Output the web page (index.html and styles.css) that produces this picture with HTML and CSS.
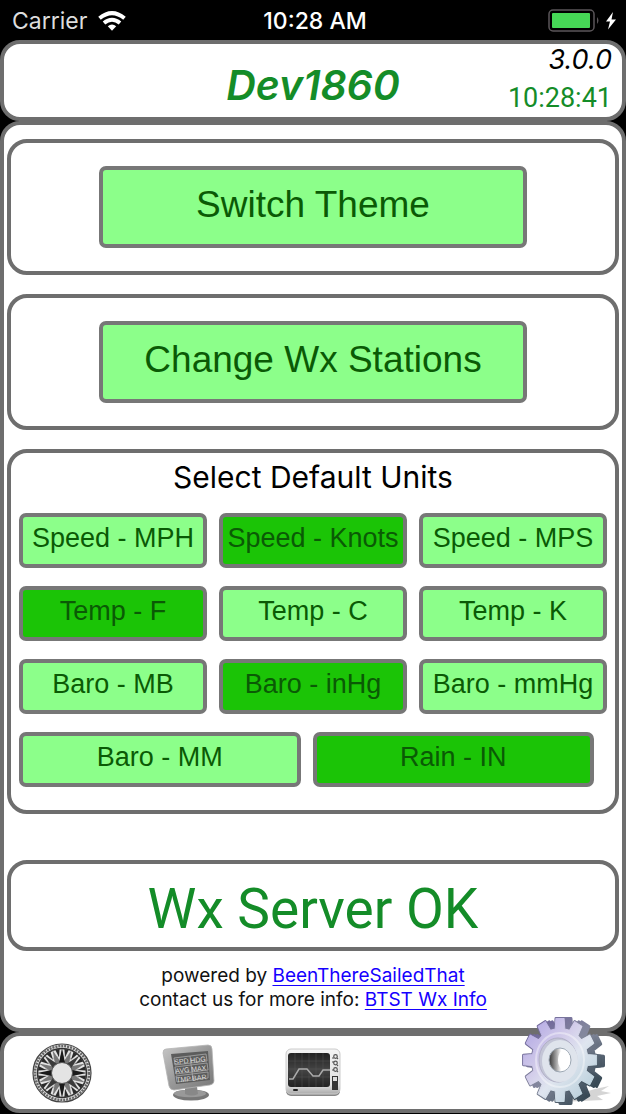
FILE: index.html
```html
<!DOCTYPE html>
<html lang="en">
<head>
    <meta charset="UTF-8">
    <meta name="viewport" content="width=device-width, initial-scale=1.0">
    <title>Dev1860 Settings</title>
    <link rel="stylesheet" href="styles.css">
</head>
<body>
    <div class="status-bar">
        <div class="carrier">
            <span>Carrier</span>
            <svg width="28" height="20" viewBox="0 0 28 20" fill="none" stroke="#fff" stroke-width="4">
                <path d="M1.5 7.2Q14 -3 26.5 7.2"/>
                <path d="M6 12Q14 5.5 22 12"/>
                <path d="M9.8 15.2Q14 12 18.2 15.2L14 19.8Z" fill="#fff" stroke="none"/>
            </svg>
        </div>
        <div class="clock">10:28 AM</div>
        <div class="battery">
            <svg width="70" height="24" viewBox="0 0 70 24">
                <rect x="1" y="1" width="45" height="21" rx="4" fill="none" stroke="#5b5659" stroke-width="1.5"/>
                <rect x="4" y="4" width="38" height="15" rx="1" fill="#46d856"/>
                <path d="M49 8Q52 11.5 49 15Z" fill="#5b5659"/>
                <path d="M65 3L58 12.5H62L60 20.5L68 10.5H63.5Z" fill="#fff"/>
            </svg>
        </div>
    </div>

    <header class="panel header">
        <h1>Dev1860</h1>
        <div class="header-info">
            <div class="version">3.0.0</div>
            <div class="time">10:28:41</div>
        </div>
    </header>

    <main class="panel main">
        <section class="card action">
            <button type="button" class="btn btn-large">Switch Theme</button>
        </section>
        <section class="card action">
            <button type="button" class="btn btn-large">Change Wx Stations</button>
        </section>
        <section class="card units">
            <h2>Select Default Units</h2>
            <div class="unit-grid">
                <button type="button" class="btn">Speed - MPH</button>
                <button type="button" class="btn selected">Speed - Knots</button>
                <button type="button" class="btn">Speed - MPS</button>
                <button type="button" class="btn selected">Temp - F</button>
                <button type="button" class="btn">Temp - C</button>
                <button type="button" class="btn">Temp - K</button>
                <button type="button" class="btn">Baro - MB</button>
                <button type="button" class="btn selected">Baro - inHg</button>
                <button type="button" class="btn">Baro - mmHg</button>
            </div>
            <div class="unit-grid unit-grid-wide">
                <button type="button" class="btn">Baro - MM</button>
                <button type="button" class="btn selected">Rain - IN</button>
            </div>
        </section>
        <section class="card server">Wx Server OK</section>
        <div class="credits">
            powered by <a href="#">BeenThereSailedThat</a><br>
            contact us for more info: <a href="#">BTST Wx Info</a>
        </div>
    </main>

    <nav class="panel tabs">
        <a href="#" aria-label="Compass">
            <svg width="60" height="62" viewBox="-30 -31 60 62">
                <defs>
                    <g id="rays">
                        <path d="M0 -25L-3 -10H3Z"/>
                        <path d="M0 -25L-3 -10H3Z" transform="rotate(90)"/>
                        <path d="M0 -25L-3 -10H3Z" transform="rotate(180)"/>
                        <path d="M0 -25L-3 -10H3Z" transform="rotate(270)"/>
                    </g>
                    <g id="marks">
                        <path d="M0 -16L-2.2 -24H2.2Z"/>
                        <path d="M0 -16L-2.2 -24H2.2Z" transform="rotate(90)"/>
                        <path d="M0 -16L-2.2 -24H2.2Z" transform="rotate(180)"/>
                        <path d="M0 -16L-2.2 -24H2.2Z" transform="rotate(270)"/>
                    </g>
                </defs>
                <circle r="29" fill="#e2e2e2" stroke="#444" stroke-width="1.2"/>
                <circle r="27" fill="none" stroke="#666" stroke-width="2.5" stroke-dasharray="2 1"/>
                <circle r="24.5" fill="none" stroke="#333" stroke-width="1.5"/>
                <circle r="14.5" fill="none" stroke="#aaa" stroke-width="6" stroke-dasharray="1 2"/>
                <g fill="#2a2a2a">
                    <use href="#marks" transform="rotate(11)"/>
                    <use href="#marks" transform="rotate(34)"/>
                    <use href="#marks" transform="rotate(56)"/>
                    <use href="#marks" transform="rotate(79)"/>
                </g>
                <use href="#rays" fill="#777" transform="rotate(22.5)"/>
                <use href="#rays" fill="#777" transform="rotate(67.5)"/>
                <use href="#rays" fill="#3a3a3a" transform="rotate(45)"/>
                <use href="#rays" fill="#1a1a1a"/>
                <circle r="10.5" fill="#e4e4e4" stroke="#555"/>
            </svg>
        </a>
        <a href="#" aria-label="Readings">
            <svg width="54" height="58" viewBox="0 0 54 58">
                <defs>
                    <linearGradient id="bezel" x1="0" y1="0" x2="1" y2="1">
                        <stop offset="0" stop-color="#c8c8c8"/>
                        <stop offset=".5" stop-color="#999"/>
                        <stop offset="1" stop-color="#777"/>
                    </linearGradient>
                </defs>
                <ellipse cx="29" cy="51" rx="18" ry="5.5" fill="#777"/>
                <ellipse cx="28" cy="49.5" rx="16" ry="3.8" fill="#999"/>
                <path d="M23 43H35L36 50Q30 53 23 50Z" fill="#888"/>
                <path d="M4 5L46 1Q50 1 50 5L52 37Q52 40 48 41L12 46Q8 46 7 42L1 9Q1 5 4 5Z" fill="url(#bezel)" stroke="#b5b5b5" stroke-width=".8"/>
                <path d="M9 10L46 7L48 36L14 40Z" fill="#5c5c5c"/>
                <path d="M12 14L44 10L45 17L13 21ZM13 23L45 19L46 26L14 30ZM14 32L46 28L46 34L15 38ZM28 12L31 36" fill="none" stroke="#aaa" stroke-width=".8"/>
                <g class="screen-text" transform="rotate(-6 28 24)">
                    <text x="13" y="19">SPD</text><text x="29" y="19">HDG</text>
                    <text x="13" y="28">AVG</text><text x="29" y="28">MAX</text>
                    <text x="13" y="37">TMP</text><text x="29" y="37">BAR</text>
                </g>
            </svg>
        </a>
        <a href="#" aria-label="Graphs">
            <svg width="58" height="50" viewBox="0 0 58 50">
                <defs>
                    <linearGradient id="scope" x1="0" y1="0" x2="0" y2="1">
                        <stop offset="0" stop-color="#f4f4f4"/>
                        <stop offset=".8" stop-color="#e0e0e0"/>
                        <stop offset="1" stop-color="#aaa"/>
                    </linearGradient>
                    <linearGradient id="glass" x1="0" y1="0" x2="0" y2="1">
                        <stop offset="0" stop-color="#222"/>
                        <stop offset=".5" stop-color="#444"/>
                        <stop offset="1" stop-color="#222"/>
                    </linearGradient>
                </defs>
                <rect x="2" y="2" width="54" height="46" rx="5" fill="#888"/>
                <rect x="2" y="1" width="54" height="45" rx="5" fill="url(#scope)" stroke="#ccc"/>
                <rect x="4" y="5" width="42" height="34" rx="3" fill="url(#glass)"/>
                <path d="M11 5V39M18 5V39M25 5V39M32 5V39M39 5V39M4 13H46M4 21H46M4 29H46" stroke="#555" stroke-width=".5"/>
                <path d="M5 31H9L15 21H23L29 28H35L39 22H46" fill="none" stroke="#aaa" stroke-width="1.5"/>
                <rect x="48" y="28" width="6" height="14" fill="#333"/>
                <rect x="49" y="29" width="4" height="4" fill="#ddd"/>
                <g fill="none" stroke="#555" stroke-width="1.2">
                    <circle cx="51.5" cy="8.5" r="1.8"/>
                    <circle cx="51.5" cy="15" r="1.8"/>
                    <circle cx="51.5" cy="21.5" r="1.8"/>
                    <path d="M48 10H50M48 14H50M48 22H50M53 10L54 11M53 17L54 18M53 23L54 24"/>
                </g>
                <rect x="9" y="41" width="5" height="2" rx="1" fill="#222"/>
            </svg>
        </a>
        <a href="#" class="active-tab" aria-label="Settings">
            <svg width="96" height="92" viewBox="0 0 96 92">
                <defs>
                    <linearGradient id="metal" gradientUnits="userSpaceOnUse" x1="-30" y1="-30" x2="30" y2="30">
                        <stop offset="0" stop-color="#b9afe5"/>
                        <stop offset=".35" stop-color="#d3cdea"/>
                        <stop offset=".6" stop-color="#dfe5ef"/>
                        <stop offset="1" stop-color="#bdd2dd"/>
                    </linearGradient>
                    <linearGradient id="edge" gradientUnits="userSpaceOnUse" x1="-30" y1="-30" x2="30" y2="30">
                        <stop offset="0" stop-color="#71689b"/>
                        <stop offset=".5" stop-color="#858a9d"/>
                        <stop offset="1" stop-color="#354752"/>
                    </linearGradient>
                    <linearGradient id="hole" x1="0" y1="0" x2="1" y2="0">
                        <stop offset="0" stop-color="#333"/>
                        <stop offset=".35" stop-color="#aaa"/>
                        <stop offset=".55" stop-color="#fff"/>
                    </linearGradient>
                    <path id="gear" stroke-linejoin="round" d="M-5.4 -30.5L-4.6 -40.7H4.6L5.4 -30.5L10.6 -29.1L16.3 -37.6L24.4 -33L19.9 -23.7L23.7 -19.9L33 -24.4L37.6 -16.3L29.1 -10.6L30.5 -5.4L40.7 -4.6V4.6L30.5 5.4L29.1 10.6L37.6 16.3L33 24.4L23.7 19.9L19.9 23.7L24.4 33L16.3 37.6L10.6 29.1L5.4 30.5L4.6 40.7H-4.6L-5.4 30.5L-10.6 29.1L-16.3 37.6L-24.4 33L-19.9 23.7L-23.7 19.9L-33 24.4L-37.6 16.3L-29.1 10.6L-30.5 5.4L-40.7 4.6V-4.6L-30.5 -5.4L-29.1 -10.6L-37.6 -16.3L-33 -24.4L-23.7 -19.9L-19.9 -23.7L-24.4 -33L-16.3 -37.6L-10.6 -29.1Z"/>
                </defs>
                <path d="M42 87Q62 76 90 71L82 76L92 78L78 81L84 85Z" fill="#888" opacity=".35"/>
                <use href="#gear" transform="translate(48 46) scale(.9 1.04)" fill="url(#edge)" stroke="url(#edge)" stroke-width="3"/>
                <use href="#gear" transform="translate(45 46) scale(.9 1.04)" fill="url(#edge)" stroke="url(#edge)" stroke-width="3"/>
                <use href="#gear" transform="translate(41 45) scale(.9 1.02)" fill="url(#metal)" stroke="url(#edge)" stroke-width="3"/>
                <use href="#gear" transform="translate(41 45) scale(.9 1.02)" fill="url(#metal)" stroke="url(#metal)"/>
                <ellipse cx="41" cy="45" rx="24" ry="27" fill="none" stroke="#fff" stroke-width="2" opacity=".4"/>
                <ellipse cx="39" cy="45" rx="19" ry="22" fill="#c3c5d6" stroke="#b0afc5"/>
                <ellipse cx="41" cy="46" rx="18" ry="21" fill="#dfe4ec"/>
                <ellipse cx="41" cy="45" rx="11" ry="12" fill="url(#hole)" stroke="#9ca7b3"/>
                <ellipse cx="45" cy="45" rx="6" ry="10" fill="#fff"/>
            </svg>
        </a>
    </nav>
</body>
</html>
```
FILE: styles.css
```css
* {
    box-sizing: border-box;
}
body {
    margin: 0;
    padding-bottom: 1px;
    min-height: 100vh;
    display: flex;
    flex-direction: column;
    background-color: #000;
    font-family: Inter, "Liberation Sans", sans-serif;
}
svg {
    display: block;
}
.status-bar {
    height: 40px;
    padding: 2px 8px 0 12px;
    display: grid;
    grid-template-columns: 1fr auto 1fr;
    align-items: center;
    color: #fff;
    font-size: 23px;
}
.carrier {
    display: flex;
    align-items: center;
    gap: 11px;
    color: #ddd;
}
.clock {
    font-weight: 500;
}
.battery {
    justify-self: end;
}
.panel {
    border: 4px solid #6e6e6e;
    border-radius: 20px;
    background-color: #fff;
}
.header {
    height: 81px;
    padding: 0 10px;
    display: grid;
    grid-template-columns: 1fr auto 1fr;
    align-items: center;
}
h1 {
    grid-column: 2;
    margin: 8px 0 0;
    color: #148c28;
    font-size: 41px;
    font-weight: 600;
    font-style: italic;
}
.header-info {
    margin-top: -4px;
    text-align: right;
    font-family: Roboto, sans-serif;
    font-size: 27px;
    line-height: 38px;
}
.version {
    font-family: Inter, sans-serif;
    font-style: italic;
}
.time {
    color: #148c28;
}
.main {
    flex: 1;
    padding: 14px 3px 0;
}
.card {
    margin-bottom: 19px;
    border: 4px solid #6e6e6e;
    border-radius: 20px;
}
.btn {
    height: 55px;
    padding: 0 0 4px;
    border: 4px solid #777;
    border-radius: 7px;
    background-color: #8cff8a;
    color: #0a5a05;
    font-family: "Liberation Sans", Arial, sans-serif;
    font-size: 27px;
    white-space: nowrap;
    cursor: pointer;
}
.btn.selected {
    background-color: #1bc406;
}
.action {
    height: 136px;
    padding-top: 23px;
    text-align: center;
}
.btn-large {
    width: 71%;
    height: 82px;
    font-size: 37px;
}
.units {
    margin-bottom: 46px;
    padding: 0 8px 23px;
}
h2 {
    margin: 0;
    padding-bottom: 12px;
    font-size: 30px;
    font-weight: 400;
    line-height: 48px;
    text-align: center;
}
.unit-grid {
    display: grid;
    grid-template-columns: repeat(3, 1fr);
    gap: 18px 12px;
}
.unit-grid-wide {
    grid-template-columns: 1fr 1fr;
    margin-top: 18px;
    padding-right: 13px;
}
.server {
    height: 91px;
    margin-bottom: 13px;
    color: #148c28;
    font-family: Roboto, sans-serif;
    font-size: 55px;
    line-height: 90px;
    text-align: center;
}
.credits {
    color: #111;
    font-size: 19px;
    line-height: 24px;
    text-align: center;
}
.credits a {
    color: #1500ff;
    text-underline-offset: 3px;
}
.tabs {
    height: 81px;
    display: grid;
    grid-template-columns: repeat(5, 1fr);
    justify-items: center;
    align-items: center;
}
.tabs a:first-child {
    justify-self: start;
    margin-left: 28px;
}
.active-tab {
    grid-column: 5;
    justify-self: end;
    margin: -24px 7px 0 0;
}
.screen-text {
    fill: #ddd;
    font-family: "Liberation Sans", sans-serif;
    font-size: 7px;
}
```
